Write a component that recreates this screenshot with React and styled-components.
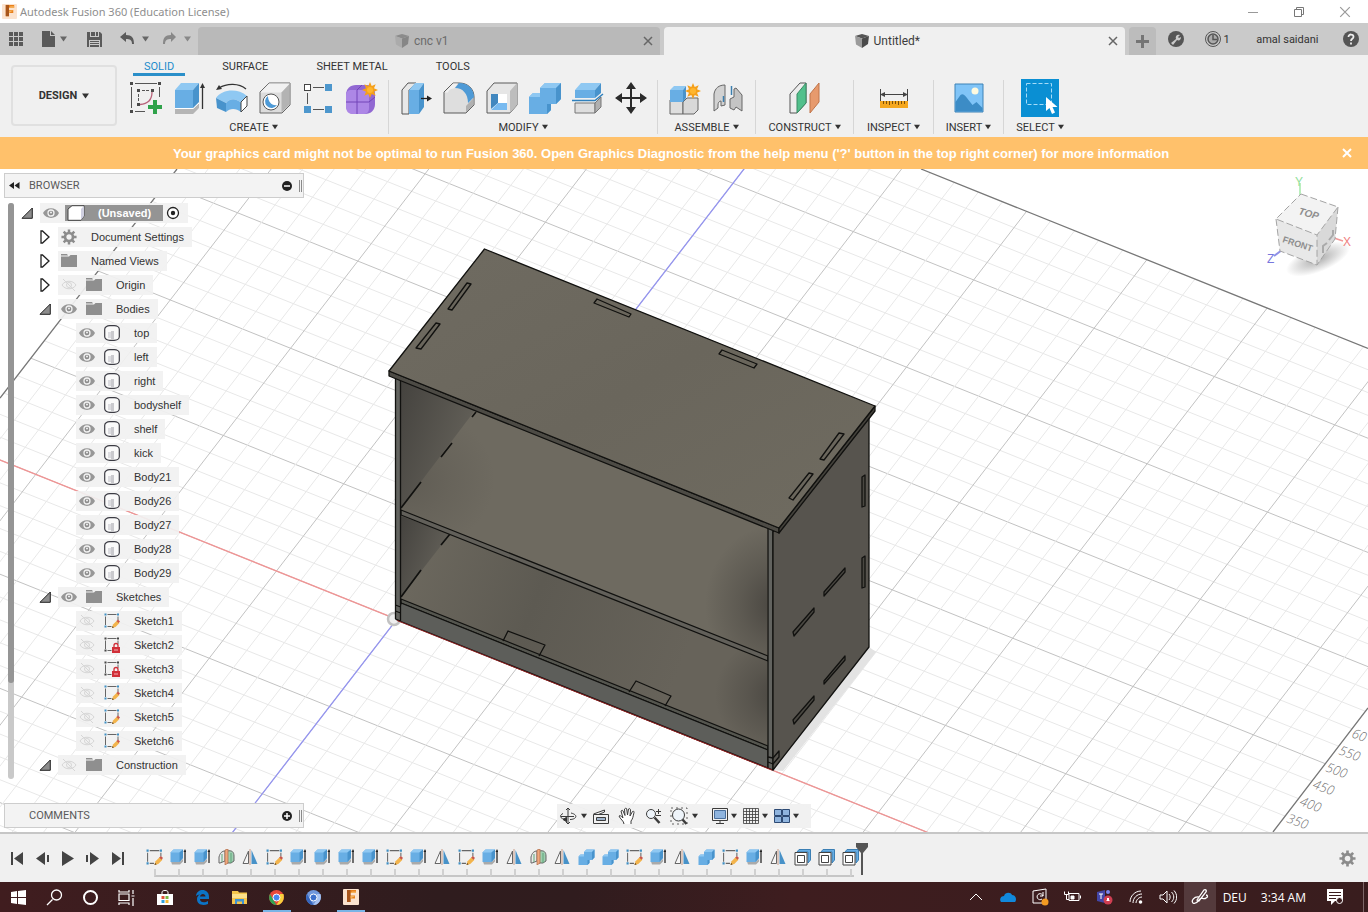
import React from "react";
import styled, { createGlobalStyle } from "styled-components";

const GlobalStyle = createGlobalStyle`
    *{
        box-sizing: border-box;
    }

    html, body, #root{
        height: 100%;
    }

    body{
        margin: 0;
        background-color: #f0f0f0;
        color: #333333;
        font-family: "Liberation Sans", Arial, sans-serif;
        font-size: 11px;
    }

    button{
        display: flex;
        align-items: center;
        justify-content: center;
        margin: 0;
        padding: 0;
        border: none;
        background-color: transparent;
        color: inherit;
        font: inherit;
        cursor: pointer;
    }

    svg{
        display: block;
        flex-shrink: 0;
    }

    ul{
        list-style: none;
        margin: 0;
        padding: 0;
    }
`

const Page = styled.div`
    min-height: 100vh;
    display: flex;
    flex-direction: column;
    overflow: hidden;
`

/* ---------- window title ---------- */

const TitleBar = styled.header`
    height: 23px;
    display: flex;
    align-items: center;
    background-color: #ffffff;
    padding-left: 2px;

    h1{
        flex: 1;
        margin: 0 0 0 3px;
        font-family: "Noto Sans", "Open Sans", sans-serif;
        font-size: 11px;
        font-weight: 400;
        color: #8e8e8e;
    }
`

const WindowButton = styled.button`
    width: 46px;
    height: 22px;
`

/* ---------- document tabs ---------- */

const TabBar = styled.div`
    height: 32px;
    display: flex;
    align-items: stretch;
    background-color: #cacaca;
`

const QuickTools = styled.div`
    width: 198px;
    display: flex;
    align-items: center;
    padding-left: 7px;
`

const QuickButton = styled.button`
    width: ${(p) => p.$w || 18}px;
    height: 24px;
    margin-right: ${(p) => p.$gap || 0}px;
`

const DocTab = styled.div`
    flex: 1;
    display: flex;
    align-items: center;
    margin: 4px 4px 0 0;
    padding: 0 6px 0 3px;
    border-radius: 4px 4px 0 0;
    background-color: ${(p) => (p.$active ? "#f0f0f0" : "#b9b9b9")};
    color: ${(p) => (p.$active ? "#3c3c3c" : "#6b6b6b")};
    font-family: Roboto, sans-serif;
    font-size: 12px;

    .doc-name{
        flex: 1;
        height: 28px;
        gap: 4px;
    }

    .doc-close{
        width: 12px;
        height: 20px;
    }
`

const AddTab = styled.button`
    width: 27px;
    margin-top: 4px;
    border-radius: 4px 4px 0 0;
    background-color: #bcbcbc;
`

const Account = styled.div`
    width: 212px;
    display: flex;
    align-items: center;
    justify-content: space-between;
    padding: 0 9px 0 12px;
    font-family: Roboto, sans-serif;
    font-size: 11px;

    .jobs{
        gap: 3px;
        margin-right: 6px;
    }

    .user{
        margin-right: 4px;
    }
`

/* ---------- ribbon ---------- */

const Ribbon = styled.div`
    height: 82px;
    display: flex;
    background-color: #f0f0f0;
    font-family: Roboto, sans-serif;
    font-size: 11px;
`

const DesignButton = styled.button`
    width: 106px;
    height: 61px;
    margin: 10px 2px 0 11px;
    border: 2px solid #e0e0e0;
    border-radius: 4px;
    gap: 5px;
    font-weight: 700;
`

const RibbonTabs = styled.nav`
    display: flex;
    gap: 26px;
    height: 22px;
    padding: 0 0 1px 14px;
`

const RibbonTab = styled.button`
    padding: 4px 11px 0;
    border-bottom: 3px solid ${(p) => (p.$active ? "#2a8fc9" : "transparent")};
    color: ${(p) => (p.$active ? "#1c8ccc" : "#333333")};
`

const Groups = styled.div`
    display: flex;
    padding-top: 3px;
`

const Group = styled.div`
    min-width: ${(p) => p.$min}px;
    height: 54px;
    display: flex;
    flex-direction: column;
    align-items: center;
    justify-content: space-between;
    border-right: 1px solid ${(p) => (p.$last ? "transparent" : "#d6d6d6")};

    .tools{
        display: flex;
        height: 36px;
        align-items: center;
    }
`

const ToolButton = styled.button`
    width: ${(p) => (p.$active ? 38 : 43)}px;
    height: ${(p) => (p.$active ? 38 : 36)}px;
    background-color: ${(p) => (p.$active ? "#0a8fd3" : "transparent")};
`

const GroupLabel = styled.button`
    gap: 3px;
    height: 14px;
`

const Banner = styled.div`
    height: 32px;
    display: flex;
    align-items: center;
    background-color: #ffc16b;
    color: #ffffff;
    font-size: 13px;
    font-weight: 700;

    p{
        flex: 1;
        margin: 0;
        padding-left: 16px;
        text-align: center;
    }

    button{
        width: 42px;
        height: 30px;
    }
`

/* ---------- viewport ---------- */

const Viewport = styled.main`
    position: relative;
    flex: 1;
    display: flex;
    flex-direction: column;
    padding: 4px;
    background-color: #ffffff;
`

const SceneSvg = styled.svg`
    position: absolute;
    inset: 0;
    width: 100%;
    height: 100%;
`

const CubeSvg = styled.svg`
    position: absolute;
    top: 4px;
    right: 12px;
`

const PanelHeader = styled.div`
    position: relative;
    width: 300px;
    height: 25px;
    display: flex;
    align-items: center;
    border: 1px solid #cdcdcd;
    background-color: #f3f3f3;
    font-family: Roboto, sans-serif;
    color: #5a5a5a;
    padding: 0 1px 0 4px;

    h2{
        flex: 1;
        margin: 0 0 0 9px;
        font-size: 11px;
        font-weight: 400;
    }

    .grip{
        width: 3px;
        height: 12px;
        margin-left: 7px;
        border-left: 1px solid #8a8a8a;
        border-right: 1px solid #8a8a8a;
    }
`

const BrowserBody = styled.div`
    position: relative;
    flex: 1;
    display: flex;
    padding: 3px 0 0 4px;
`

const Scroll = styled.div`
    width: 6px;
    height: 576px;
    margin-top: 2px;
    border-radius: 3px;
    background-color: #c9c9c9;

    div{
        height: 480px;
        border-radius: 3px;
        background-color: #959595;
    }
`

const Row = styled.li`
    height: 24px;
    display: flex;
    align-items: center;
    padding-left: ${(p) => p.$indent}px;
`

const Arrow = styled.button`
    width: 18px;
    height: 20px;
`

const Chip = styled.div`
    height: 20px;
    display: flex;
    align-items: center;
    margin-left: ${(p) => p.$left}px;
    padding: 0 8px 0 2px;
    background-color: rgba(241, 241, 241, 0.92);

    .cell{
        width: 18px;
        height: 20px;
        margin-right: 7px;
    }

    .label{
        margin-left: 6px;
        font-size: 11px;
        line-height: 20px;
    }
`

const RootChip = styled(Chip)`
    .cell{
        margin-right: 5px;
    }
`

const RootName = styled.button`
    width: 98px;
    height: 16px;
    margin-right: 3px;
    padding-left: 2px;
    justify-content: flex-start;
    background-color: #949494;
    color: #ffffff;
    font-weight: 700;
    gap: 13px;
`

const BottomRow = styled.div`
    position: relative;
    display: grid;
    grid-template-columns: 1fr auto 1fr;
    align-items: center;
`

const NavBar = styled.div`
    height: 24px;
    display: flex;
    align-items: center;
    padding: 0 12px 0 2px;
    background-color: rgba(240, 240, 240, 0.95);
`

const NavButton = styled.button`
    height: 22px;
    gap: ${(p) => (p.$tight ? 2 : 4)}px;
    margin-right: ${(p) => p.$gap}px;
`

/* ---------- timeline ---------- */

const Timeline = styled.section`
    height: 50px;
    display: flex;
    border-top: 2px solid #c6c6c6;
    background-color: #f0f0f0;
    padding: 0 12px 0 5px;

    .playback{
        display: flex;
        width: 137px;
        height: 48px;
        align-items: center;
    }

    .playback button{
        width: 25px;
        height: 24px;
    }

    .settings{
        width: 18px;
        margin-left: auto;
    }
`

const Track = styled.ol`
    list-style: none;
    display: flex;
    margin: 0;
    padding: 11px 0 0;
`

const Step = styled.li`
    width: 24px;

    button{
        width: 24px;
        height: 24px;
    }

    /* tick plus its share of the rail */
    &::after{
        content: "";
        display: block;
        width: 24px;
        height: 6px;
        margin-left: 12px;
        border-left: 2px solid #d0d0d0;
        border-bottom: 2px solid #c6c6c6;
    }

    &:last-of-type::after{
        width: 2px;
    }
`

const Marker = styled.div`
    margin: 9px 0 0 -7px;
`

/* ---------- taskbar ---------- */

const Taskbar = styled.footer`
    height: 30px;
    display: flex;
    background: linear-gradient(90deg, #401d1f 0, #2f1c1e 32%, #301c1e 42%, #3e1d1f 58%, #391d1e 100%);
    color: #ffffff;
    font-family: "Open Sans", "Noto Sans", sans-serif;
    font-size: 12px;
`

const TaskButton = styled.button`
    width: ${(p) => p.$w || 37}px;
    border-bottom: 2px solid transparent;
    border-top: 2px solid transparent;
    position: relative;

    &::after{
        content: "";
        position: absolute;
        left: 5px;
        right: 4px;
        bottom: -2px;
        height: 2px;
        background-color: ${(p) => (p.$open ? "#79b4e6" : "transparent")};
    }
`

const Tray = styled.div`
    display: flex;
    margin-left: auto;
    padding-right: 4px;

    .text{
        padding: 0 7px;
    }

    .notes{
        width: 38px;
        margin: 0 9px 0 3px;
    }

    .desktop{
        width: 1px;
        background-color: #7c6667;
    }
`

const TrayButton = styled.button`
    width: 32px;
    background-color: ${(p) => (p.$active ? "#543a3c" : "transparent")};
`

/* ---------- small glyphs ---------- */

const Caret = ({ color = "#333", w = 7 }) => (
    <svg width={w} height="6" viewBox="0 0 7 6">
        <path d="M0 .5h7L3.500 5.500z" fill={color} />
    </svg>
)

const Cross = ({ size = 10, color = "#666", width = 1.5 }) => (
    <svg width={size} height={size} viewBox="0 0 10 10">
        <path d="M1 1l8 8M9 1l-8 8" stroke={color} strokeWidth={width} />
    </svg>
)

const FusionLogo = ({ size }) => (
    <svg width={size} height={size} viewBox="0 0 16 16">
        <rect width="16" height="16" rx="1" fill="#fbe3cf" />
        <path d="M4 1h9v3H7.500v2.500H12v3H7.500V13H4z" fill="#e8811c" />
        <path d="M4 1h3.500v12H4z" fill="#a8561c" />
        <path d="M7.500 4l1.500-1.500h4V4zM7.500 9.500V7H12z" fill="#f7b25a" />
    </svg>
)

const DocCube = ({ faded }) => (
    <svg width="16" height="16" viewBox="0 0 16 16" opacity={faded ? 0.45 : 1}>
        <path d="M1 3l7-2 7 2-7 2.500z" fill="#555" />
        <path d="M1 3l7 2.500V15l-6-3.500z" fill="#9b9b9b" />
        <path d="M15 3L8 5.500V15l6-4z" fill="#4a4a4a" />
    </svg>
)

const Gear = ({ size = 18, color = "#8c8c8c" }) => (
    <svg width={size} height={size} viewBox="0 0 18 18">
        <circle cx="9" cy="9" r="4.500" fill="none" stroke={color} strokeWidth="3" />
        <path d="M9 .5v4M9 13.500v4M.5 9h4M13.500 9h4M3 3l2.800 2.800M12.200 12.200L15 15M15 3l-2.800 2.800M5.800 12.200L3 15" stroke={color} strokeWidth="2.800" />
    </svg>
)

const Eye = ({ off }) => off ? (
    <svg width="16" height="14" viewBox="0 0 16 14" fill="none" stroke="#d6d6d6">
        <path d="M1 7c3-5 11-5 14 0-3 5-11 5-14 0zM2 1l12 12" />
        <circle cx="8" cy="7" r="2.500" />
    </svg>
) : (
    <svg width="16" height="12" viewBox="0 0 16 12">
        <path d="M0 6c3-6.500 13-6.500 16 0-3 6.500-13 6.500-16 0z" fill="#979797" />
        <circle cx="8" cy="6" r="3" fill="#8c8c8c" stroke="#f2f2f2" strokeWidth="1.300" />
        <circle cx="8" cy="5.500" r="1" fill="#f2f2f2" />
    </svg>
)

const Folder = () => (
    <svg width="16" height="14" viewBox="0 0 16 14" fill="#8f8f8f">
        <path d="M0 0h6l1 1.500H0zM0 2.500h8L9.500 1H16v12H0z" />
    </svg>
)

const BodyIcon = () => (
    <svg width="16" height="16" viewBox="0 0 16 16">
        <rect x="0.700" y="0.700" width="14.600" height="14.600" rx="5" ry="3.500" fill="#fafafa" stroke="#3c3c44" strokeWidth="1.200" />
        <path d="M4 7h3v6H4z" fill="#dcdce0" />
        <path d="M7 6h3v8H7z" fill="#cacace" />
    </svg>
)

const Pencil = () => (
    <g>
        <path d="M8 15l1-3.500 4-4 2.500 2.500-4 4z" fill="#f3b44c" />
        <path d="M12.500 8L14 6.500l2 2L14.500 10z" fill="#c9564a" />
        <path d="M8 15l.5-2 1.500 1.500z" fill="#6a4a20" />
    </g>
)

const SketchIcon = ({ locked, size = 16 }) => (
    <svg width={size} height={size} viewBox="0 0 16 16">
        <path d="M1.500 3.500v8.500M3.500 1.500h9M14 3.500v3.500M3.500 13.500h4" stroke="#666" fill="none" />
        <path d="M.5.500h2v2h-2zM13 .5h2v2h-2zM.5 12.500h2v2h-2z" fill={locked ? "#444" : "#3e8fc4"} />
        {locked ? (
            <g>
                <rect x="8" y="10" width="8" height="6" fill="#d12f38" />
                <path d="M10 10V8.500a2 2 0 014 0V10" stroke="#d12f38" fill="none" strokeWidth="1.300" />
                <path d="M10 13h4" stroke="#f3b0b3" />
            </g>
        ) : <Pencil />}
    </svg>
)

/* ---------- ribbon drawings ---------- */

const BLUE = "#68aee4"
const BLUE_LIGHT = "#8fc8f2"
const BLUE_DARK = "#4893cc"

const Star = ({ x, y }) => (
    <g transform={`translate(${x} ${y})`}>
        <path d="M0-8l1.700 4L5.700-5.700 4-1.700 8 0 4 1.700 5.700 5.700 1.700 4 0 8-1.700 4-5.700 5.700-4 1.700-8 0-4-1.700-5.700-5.700-1.700-4z" fill="#f5a01a" />
        <circle r="3" fill="#ffb62e" />
    </g>
)

const toolArt = {
    sketch: (
        <>
            <path d="M5 1.500h22M1.500 5v21M29.500 5v10M5 29.500h10" stroke="#555" fill="none" />
            <path d="M0 0h3v3H0zM28 0h3v3h-3zM0 28h3v3H0zM7 7h3v3H7zM21 7h3v3h-3zM7 21h3v3H7z" fill="#4a4a4a" />
            <path d="M12 8.500h7M8.500 12v7" stroke="#555" strokeDasharray="3 1" />
            <path d="M22 10c0 8-5 12-12 12.500" stroke="#b9627a" fill="none" strokeWidth="1.300" />
            <path d="M23 18h4v5h5v4h-5v5h-4v-5h-5v-4h5z" fill="#2fa24a" />
        </>
    ),
    extrude: (
        <>
            <path d="M2 27h18v5H2zM20 27l6-6v5l-6 6z" fill="#b5b5b5" />
            <path d="M2 26.500h18l6-5.500" stroke="#fff" fill="none" />
            <path d="M2 8h18v18H2z" fill={BLUE} />
            <path d="M2 8l6-7h18l-6 7z" fill={BLUE_LIGHT} />
            <path d="M20 8l6-7v19l-6 6z" fill={BLUE_DARK} />
            <path d="M29.500 5v22" stroke="#333" strokeWidth="1.300" />
            <path d="M29.500 1l2.500 5h-5z" fill="#333" />
        </>
    ),
    revolve: (
        <>
            <path d="M0 16C6 7 22 6 31 14l-6 7c-5-5-11-5-15 0z" fill={BLUE_LIGHT} />
            <path d="M0 16l10 5v9L1 26z" fill={BLUE_DARK} />
            <path d="M10 21c4-5 10-5 15 0v9c-5-4-11-4-15 0z" fill={BLUE} />
            <path d="M25 20l6-6v10l-6 6z" fill="#fff" stroke="#444" />
            <path d="M3 6C11 1 23 1 30 7" stroke="#333" fill="none" strokeWidth="1.300" />
            <path d="M0 8l3-5 3 4z" fill="#333" />
        </>
    ),
    hole: (
        <>
            <path d="M1 10l9-9h21v22l-8 8H1z" fill="#dcdcdc" stroke="#666" />
            <path d="M1.500 10.500h21L31 1.500H10z" fill="#f1f1f1" />
            <path d="M22.500 10.500L30.500 2v20.500l-8 8z" fill="#b3b3b3" />
            <circle cx="12" cy="20" r="8" fill="#fff" stroke="#555" />
            <path d="M9 14a6.500 6.500 0 109 9c-5 1-9-3-9-9z" fill="#4e9ad6" />
        </>
    ),
    pattern: (
        <>
            <path d="M11 5.500h11M5.500 11v11M11 27.500h11" stroke="#555" />
            <rect x="2.500" y="2.500" width="6" height="6" fill="#fff" stroke="#444" />
            <path d="M23 2h7v7h-7zM2 24h7v7H2zM23 24h7v7h-7z" fill="#4d97cd" />
        </>
    ),
    form: (
        <>
            <path d="M1 13c0-6 4-10 10-10h11c6 0 8 4 8 9v10c0 6-4 10-10 10H9c-5 0-8-3-8-9z" fill="#9168d2" />
            <path d="M1 13c0-3 2-5 5-5h12c4 0 6 2 6 6v12c0 4-2 6-6 6H8c-5 0-7-3-7-8z" fill="#ad87e6" />
            <path d="M12 8v24M1 20h23M24 20l6-5M12 8l5-5" stroke="#7245b8" fill="none" />
            <Star x={25} y={8} />
        </>
    ),
    pressPull: (
        <>
            <path d="M2 8l6-7h8L9 8v24H2z" fill="#e8e8e8" stroke="#555" />
            <path d="M9 8l6-7h9l-5 7z" fill={BLUE_LIGHT} />
            <path d="M9 8h10v24H9z" fill={BLUE} />
            <path d="M19 8l5-7v24l-5 7z" fill={BLUE_DARK} />
            <path d="M21 16.500h7" stroke="#222" strokeWidth="1.300" />
            <path d="M27 13.500l5 3-5 3z" fill="#222" />
        </>
    ),
    fillet: (
        <>
            <path d="M1 10l9-9h6c9 0 15 6 15 14v8l-8 8H1z" fill="#dedede" stroke="#5a5a5a" />
            <path d="M1.500 10.500L10 1.500h5l-4 5c-3 0-5 1-6 4z" fill="#f1f1f1" />
            <path d="M23 24l7.500-8v7L23 30.500z" fill="#b0b0b0" />
            <path d="M12 6l4-5c9 0 15 6 15 14l-6 6C25 12 20 6 12 6z" fill="#4e9ad6" />
        </>
    ),
    shell: (
        <>
            <path d="M1 9l7-8h23v22l-7 8H1z" fill="#e6e6e6" stroke="#5a5a5a" />
            <path d="M24 9l7-8v22l-7 8z" fill="#bdbdbd" />
            <path d="M5 12h16v16H5z" fill="#fff" />
            <path d="M5 12h7v9l-7 6z" fill="#4187bf" />
            <path d="M5 28l7-7h9v7z" fill="#78baf0" />
        </>
    ),
    combine: (
        <>
            <path d="M0 15l4-4h7V6l5-5h16v16l-5 5h-5v6l-4 4H0z" fill={BLUE} />
            <path d="M0 15l4-4h7v4zM11 6l5-5h16l-5 5z" fill={BLUE_LIGHT} />
            <path d="M27 6l5-5v16l-5 5zM18 22h4v6l-4 4z" fill={BLUE_DARK} />
        </>
    ),
    split: (
        <>
            <path d="M3 8l6-7h20l-6 7z" fill={BLUE_LIGHT} />
            <path d="M3 8h20v8H3z" fill={BLUE} />
            <path d="M23 8l6-7v10l-6 5z" fill={BLUE_DARK} />
            <path d="M0 18.500h23L31 12" stroke="#2f80bc" fill="none" strokeWidth="1.500" />
            <path d="M3 21h20v10H3z" fill="#dedede" stroke="#777" />
            <path d="M23 21l6-6v10l-6 6z" fill="#b0b0b0" stroke="#777" />
        </>
    ),
    move: (
        <g fill="#2b2b2b">
            <path d="M16 0l5 7h-4v8h8v-4l7 5-7 5v-4h-8v8h4l-5 7-5-7h4v-8H7v4l-7-5 7-5v4h8V7h-4z" />
        </g>
    ),
    component: (
        <>
            <path d="M1 18h13v14H1z" fill="#dedede" stroke="#666" />
            <path d="M14 20l4-4h11v12l-4 4H14z" fill="#d8d8d8" stroke="#666" />
            <path d="M1 8l4-4h12l-3 4z" fill={BLUE_LIGHT} />
            <path d="M1 8h13v12H1z" fill={BLUE} />
            <path d="M14 8l3-4v12l-3 4z" fill={BLUE_DARK} />
            <Star x={24} y={9} />
        </>
    ),
    joint: (
        <>
            <path d="M2 12c1-6 5-9 11-9v20l-4 1v-5c-2 0-3 2-3 4v3l-4 3z" fill="#d2d2d2" stroke="#666" />
            <path d="M30 13l-6-7-2 1v8l-4 2v9l4 2 2-3 6 4z" fill="#c4c4c4" stroke="#666" />
            <path d="M11.500 14v6M19.500 4v9" stroke="#3c7fae" strokeWidth="1.500" />
        </>
    ),
    construct: (
        <>
            <path d="M1 12L11 1h6v20L8 31H1z" fill="#ededed" stroke="#555" />
            <path d="M8 12l9-11v20L8 31z" fill="#52c08c" stroke="#3b8b64" />
            <path d="M21 12L30 1v19l-9 11z" fill="#e79a6d" stroke="#c0754a" />
        </>
    ),
    measure: (
        <>
            <path d="M2.500 7v12M29.500 7v12M5 12.500h22" stroke="#444" />
            <path d="M2 12.500l5-2.500v5zM30 12.500L25 10v5z" fill="#444" />
            <path d="M2 19h28v7H2z" fill="#f5a71e" />
            <path d="M5.500 19v3M8.500 19v3M11.500 19v4M14.500 19v3M17.500 19v3M20.500 19v4M23.500 19v3M26.500 19v3" stroke="#7a4f0a" />
        </>
    ),
    insert: (
        <>
            <path d="M2 2h28v28H2z" fill="#80c4f7" stroke="#3c82b6" />
            <circle cx="22" cy="9" r="3.500" fill="#fffadf" />
            <path d="M2.500 29.500V20l5-7c3-2 5 1 8 5l4 5 4-3 6 6v3.500z" fill="#3c8cc6" />
        </>
    ),
    select: (
        <>
            <path d="M2.500 1.500h25v21h-25z" stroke="#a6dcf8" strokeDasharray="4 2" fill="none" />
            <path d="M22 15v14l3.500-3 2.500 6 3-1.500-2.500-5.500h5z" fill="#fff" />
        </>
    ),
}

const groups = [
    { label: "CREATE", min: 270, tools: ["sketch", "extrude", "revolve", "hole", "pattern", "form"] },
    { label: "MODIFY", min: 269, tools: ["pressPull", "fillet", "shell", "combine", "split", "move"] },
    { label: "ASSEMBLE", min: 98, tools: ["component", "joint"] },
    { label: "CONSTRUCT", min: 98, tools: ["construct"] },
    { label: "INSPECT", min: 80, tools: ["measure"] },
    { label: "INSERT", min: 70, tools: ["insert"] },
    { label: "SELECT", min: 73, tools: ["select"] },
]

/* ---------- 3d scene ---------- */

// grid basis on screen: one major cell along each family of lines
const SLOPE_X = 0.4015
const SLOPE_Z = 0.771
const STEP_X = 114.2
const STEP_Z = 157.6

const xLine = (k) => {
    const y0 = 460 + STEP_X * k
    return { x1: -200, y1: y0 - 200 * SLOPE_X, x2: 1600, y2: y0 + 1600 * SLOPE_X }
}

const zLine = (k) => {
    const x0 = 744 + STEP_Z * k
    return { x1: x0 + 200 * SLOPE_Z, y1: -31, x2: x0 - 900 * SLOPE_Z, y2: 1069 }
}

const range = (from, to) => Array.from({ length: to - from + 1 }, (_, i) => from + i)

const topSlots = [
    "448,309 467,283 471,284 452,310",
    "416,348 436,323 440,324 421,349",
    "597,299 631,314 629,317 594,303",
    "722,350 757,364 754,368 719,354",
    "820,459 839,433 844,434 824,460",
    "789,498 809,473 813,474 793,500",
]

const sideSlots = [
    "793,632 814,608 814,612 794,636",
    "824,592 845,568 845,572 824,596",
    "793,720 814,696 814,700 794,724",
    "824,681 845,656 845,660 824,684",
    "862,477 865,475 865,506 862,507",
    "862,558 865,556 865,587 862,588",
]

const Scene = () => (
    <SceneSvg viewBox="0 169 1368 663" preserveAspectRatio="xMidYMid slice" aria-label="Model">
        <defs>
            <clipPath id="plane">
                <path d="M177-169V169L-400 917V1400H832L1273 832L1368 708V348.300L921 168.800V-200z" />
            </clipPath>
            <linearGradient id="topFace" x1="0" y1="0" x2="1" y2="1">
                <stop offset="0" stopColor="#6f6b61" />
                <stop offset="0.5" stopColor="#6a665c" />
                <stop offset="1" stopColor="#6f6b60" />
            </linearGradient>
            <linearGradient id="wall" x1="0" y1="0" x2="1" y2="0.600">
                <stop offset="0" stopColor="#44423e" />
                <stop offset="1" stopColor="#66635b" />
            </linearGradient>
            <radialGradient id="shade">
                <stop offset="0" stopColor="#45423d" stopOpacity="0.9" />
                <stop offset="0.5" stopColor="#45423d" stopOpacity="0.400" />
                <stop offset="1" stopColor="#45423d" stopOpacity="0" />
            </radialGradient>
            <linearGradient id="lower" x1="0" y1="0.300" x2="0.800" y2="0.500">
                <stop offset="0" stopColor="#6c685e" />
                <stop offset="0.450" stopColor="#5d5a52" />
                <stop offset="1" stopColor="#67635a" />
            </linearGradient>
            <clipPath id="upperBay"><path d="M401 380L767 530V657L401 510z" /></clipPath>
            <clipPath id="lowerBay"><path d="M401 515L767 661V746L401 599z" /></clipPath>
        </defs>

        <g clipPath="url(#plane)">
            {range(-29, 30).map((i) => (
                <line key={`x${i}`} {...xLine(i / 5)} stroke={i % 5 ? "#e8e8e8" : "#c2c2c2"} />
            ))}
            {range(-40, 33).map((i) => (
                <line key={`z${i}`} {...zLine(i / 5)} stroke={i % 5 ? "#e8e8e8" : "#c2c2c2"} />
            ))}
        </g>
        <path d="M177 169L0 398M921 169L1368 348.500M1368 708L1273 832" stroke="#777" fill="none" strokeWidth="1.300" />
        <line {...xLine(0)} stroke="#f09494" strokeWidth="1.300" />
        <line {...zLine(0)} stroke="#9494f0" strokeWidth="1.300" />

        <g fill="#707070" fontFamily="Open Sans, sans-serif" fontSize="13" fontStyle="italic" fontWeight="300">
            {[350, 400, 450, 500, 550, 60].map((n, i) => (
                <text key={n} transform={`translate(${1286 + i * 13} ${822 - i * 17}) rotate(20)`}>{n}</text>
            ))}
        </g>

        <path d="M773 770L869 647L876 652L783 771z" fill="#e3e3e3" />
        <circle cx="394" cy="619" r="6" fill="#efefef" stroke="#c2c2c2" strokeWidth="2.500" />

        <g stroke="#11110f" strokeWidth="1.300" strokeLinejoin="round">
            <path d="M400 374L768 524V768L400 620z" fill="#6e6a60" stroke="none" />
            <g clipPath="url(#upperBay)" stroke="none">
                <ellipse cx="405" cy="480" rx="90" ry="75" fill="url(#shade)" opacity="0.400" />
                <ellipse cx="775" cy="605" rx="70" ry="80" fill="url(#shade)" />
            </g>
            <path d="M401 515L768 661V748L401 599z" fill="url(#lower)" stroke="none" />
            <g clipPath="url(#lowerBay)" stroke="none">
                <ellipse cx="780" cy="695" rx="65" ry="60" fill="url(#shade)" />
            </g>
            <path d="M401 376L476 409L401 508z" fill="url(#wall)" stroke="none" />
            <path d="M401 516L450 534L401 597z" fill="url(#wall)" stroke="none" />
            <path d="M476 412L472 417M452 443L441 457M421 482L401 508M450 534L441 545M421 570L401 597" fill="none" strokeWidth="1.700" />
            <path d="M401 510L768 656V661L401 515z" fill="#62605a" />
            <path d="M401 599L768 746V750L401 603z" fill="#55564f" />
            <path d="M401 603L768 750V768L397 620z" fill="#5d5e5a" />
            <path d="M503 641L508 631L545 645L539 656M629 692L636 681L671 696L665 706" fill="none" />
            <path d="M395.500 376L400.500 378V621L395.500 619zM395.500 605L400.500 607M395.500 611L400.500 613" fill="#62635f" />
            <path d="M768 528L773 530V770L768 768z" fill="#62635f" />
            <path d="M773 532L869 416V647L773 770z" fill="#57544e" />
            <path d="M768 757L773 758L779 751V757L773 764L768 762" fill="none" />
            <path d="M389 371L779 528L779 533L389 376z" fill="#4d4b45" />
            <path d="M779 528L875 406V411L779 533z" fill="#43413b" />
            <path d="M484.500 249L875 406L779 528L389 371z" fill="url(#topFace)" />
            {topSlots.map((s) => <polygon key={s} points={s} fill="#6a665c" />)}
            {sideSlots.map((s) => <polygon key={s} points={s} fill="#4a4842" />)}
        </g>
        <path d="M397 620.500L772 770" stroke="#8d2020" />
    </SceneSvg>
)

const ViewCube = () => (
    <CubeSvg width="92" height="104" viewBox="0 0 92 104" fontFamily="Liberation Sans, sans-serif">
        <defs>
            <radialGradient id="cubeShadow">
                <stop offset="0" stopColor="#888" stopOpacity="0.7" />
                <stop offset="1" stopColor="#888" stopOpacity="0" />
            </radialGradient>
        </defs>
        <ellipse cx="54" cy="86" rx="34" ry="13" fill="url(#cubeShadow)" transform="rotate(-22 54 86)" />
        <path d="M36 24V10" stroke="#a5e8a8" strokeWidth="1.500" />
        <path d="M70 65l9 3" stroke="#f29a9a" strokeWidth="1.500" />
        <path d="M18 77l-8 6" stroke="#8f8fe6" strokeWidth="2" />
        <path d="M37 21L74 34 53 62 12 46z" fill="#f3f3f3" />
        <path d="M12 46l41 16v30L16 78z" fill="#e8e8e8" />
        <path d="M53 62l21-28-3 32-18 26z" fill="#d9d9d9" />
        <path d="M37 21L74 34 53 62 12 46zM12 46l4 32 37 14V62M74 34l-3 32-18 26" fill="none" stroke="#a4a4a4" strokeDasharray="7 3" />
        <g fontWeight="700" fill="#8e8e8e">
            <text x="34" y="41" fontSize="10" transform="rotate(16 34 41)" fontStyle="italic">TOP</text>
            <text x="18" y="69" fontSize="9" transform="rotate(18 18 69)">FRONT</text>
            <path d="M59 80v-7l4-3M65 67l4-5v-5" stroke="#aaa" fill="none" strokeWidth="2" />
        </g>
        <text x="31" y="13" fontSize="12" fill="#92e09a">Y</text>
        <text x="79" y="73" fontSize="12" fill="#f08080">X</text>
        <text x="3" y="90" fontSize="12" fill="#7777dd">Z</text>
    </CubeSvg>
)

/* ---------- browser tree ---------- */

const tree = [
    { name: "Document Settings", level: 1, icon: "gear", arrow: "closed" },
    { name: "Named Views", level: 1, icon: "folder", arrow: "closed" },
    { name: "Origin", level: 1, icon: "folder", arrow: "closed", eye: "off" },
    { name: "Bodies", level: 1, icon: "folder", arrow: "open", eye: "on" },
    ...["top", "left", "right", "bodyshelf", "shelf", "kick", "Body21", "Body26", "Body27", "Body28", "Body29"].map((name) => (
        { name, level: 2, icon: "body", eye: "on" }
    )),
    { name: "Sketches", level: 1, icon: "folder", arrow: "open", eye: "on" },
    { name: "Sketch1", level: 2, icon: "sketch", eye: "off" },
    { name: "Sketch2", level: 2, icon: "locked", eye: "off" },
    { name: "Sketch3", level: 2, icon: "locked", eye: "off" },
    { name: "Sketch4", level: 2, icon: "sketch", eye: "off" },
    { name: "Sketch5", level: 2, icon: "sketch", eye: "off" },
    { name: "Sketch6", level: 2, icon: "sketch", eye: "off" },
    { name: "Construction", level: 1, icon: "folder", arrow: "open", eye: "off" },
]

const treeIcons = {
    gear: <Gear size={16} />,
    folder: <Folder />,
    body: <BodyIcon />,
    sketch: <SketchIcon />,
    locked: <SketchIcon locked />,
}

const TreeArrow = ({ open }) => (
    <Arrow aria-label={open ? "Collapse" : "Expand"}>
        {open ? (
            <svg width="12" height="12" viewBox="0 0 12 12"><path d="M11.300 1v10.300H1z" fill="#8d8d8d" stroke="#222" /></svg>
        ) : (
            <svg width="10" height="14" viewBox="0 0 10 14"><path d="M1 1h1.500L9 7l-6.500 6H1z" fill="#fff" stroke="#222" strokeWidth="1.300" /></svg>
        )}
    </Arrow>
)

const Centered = styled.span`
    height: 100%;
    display: flex;
    align-items: center;
    justify-content: center;
`

const TreeRow = ({ item }) => (
    <Row $indent={item.level === 1 ? 22 : 62}>
        {item.arrow && <TreeArrow open={item.arrow === "open"} />}
        <Chip $left={item.level === 1 ? 4 : 0}>
            {item.eye && <button className="cell" aria-label={`Show or hide ${item.name}`}><Eye off={item.eye === "off"} /></button>}
            <span className="cell"><Centered>{treeIcons[item.icon]}</Centered></span>
            <span className="label">{item.name}</span>
        </Chip>
    </Row>
)

/* ---------- navigation bar ---------- */

const navItems = [
    { name: "Orbit", caret: true, gap: 5, art: <><path d="M9 1v16M7 3l2-2 2 2M7 15l2 2 2-2M4 6.500C-1 9 2 12.500 8 12.500M12 6c8 2 5 6.500-1 6.500M2 9.500h13" /><path d="M8 10l-4 2.500 4 2.500" fill="#333" /></> },
    { name: "Look at", gap: 8, art: <><path d="M1.500 7.500h15v9h-15zM1.500 7l11-4v2l-6 2.500" /><path d="M4.500 10.500h9v3h-9z" fill="#9fb4cc" /></> },
    { name: "Pan", gap: 8, art: <path d="M6 17c0-3-4-5-5-8 1-1 2 0 4 2L3 4c1-1 2-1 2.500 1L7 8.500 6.500 2c1-1 2-1 2.200 0L9.500 8l1-6c1-1 2 0 2 1l-.5 6 2.500-4.500c1-.5 2 0 1.500 1-1 4-1 6-3 8.500v3" fill="#fff" /> },
    { name: "Zoom", gap: 8, art: <><circle cx="7" cy="7" r="4.500" fill="#eef4fa" /><path d="M10.500 10.500l5 5.500" strokeWidth="2.500" /><path d="M12 4.500h5M14.500 2v5M12 8.500h5" /></> },
    { name: "Fit", caret: true, gap: 13, art: <><circle cx="8.500" cy="8" r="6" fill="#eef4fa" /><path d="M12.500 12.500l4 4.500" strokeWidth="2.500" /><path d="M1 1h16v16H1z" strokeDasharray="2 3" strokeWidth="0.800" /></> },
    { name: "Display settings", caret: true, gap: 5, tight: true, art: <><path d="M1.500 1.500h15v12h-15zM5 16.500h8M9 13.500v3" /><path d="M3.500 3.500h11v8h-11z" fill="#8fb4de" stroke="#4a6f9c" /></> },
    { name: "Grid and snaps", caret: true, gap: 5, tight: true, art: <path d="M1.500 1.500h15v15h-15zM1.500 4.500h15M1.500 7.500h15M1.500 10.500h15M1.500 13.500h15M4.500 1.500v15M7.500 1.500v15M10.500 1.500v15M13.500 1.500v15" strokeWidth="0.800" /> },
    { name: "Viewports", caret: true, gap: 0, tight: true, art: <path d="M1.500 2.500h7v6h-7zM9.500 2.500h7v6h-7zM1.500 9.500h7v6h-7zM9.500 9.500h7v6h-7z" fill="#8fb4de" stroke="#2d4a74" /> },
]

/* ---------- timeline ---------- */

const MirrorIcon = () => (
    <svg width="16" height="16" viewBox="0 0 16 16">
        <path d="M6.500 2v12.500H1z" fill="#f6f6f6" stroke="#666" />
        <path d="M9.500 1l6 14h-6z" fill="#4892c8" />
        <path d="M8 0v16" stroke="#b77a5c" strokeWidth="0.700" />
    </svg>
)

const stepIcons = {
    s: <SketchIcon size={17} />,
    e: <svg width="16" height="16" viewBox="0 0 32 32">
        <path d="M2 25h18l6-5v5l-6 6H4z" fill="#aaa" />
        <path d="M1 7l6-6h19v17l-7 8H1z" fill={BLUE} />
        <path d="M1 7l6-6h19l-7 6z" fill={BLUE_LIGHT} /><path d="M19 7l7-6v17l-7 8z" fill={BLUE_DARK} />
        <path d="M30 4v24" stroke="#222" strokeWidth="2.500" /><path d="M30 0l3 6h-6z" fill="#222" />
    </svg>,
    g: <svg width="17" height="16" viewBox="0 0 17 16">
        <path d="M1 8c1-4 3-6 6-6v10l-5 2H1z" fill="#e8e8e8" stroke="#666" />
        <path d="M9 2c5-1 7 1 7 5v5l-3 2H9z" fill="#9fceb0" stroke="#666" />
        <path d="M7 1l3-1v14l-3 2z" fill="#efa77e" stroke="#b06a45" strokeWidth="0.700" />
        <path d="M4 5v8M13 4v10" stroke="#5da679" />
    </svg>,
    m: <MirrorIcon />,
    c: <svg width="17" height="16" viewBox="0 0 32 32">{toolArt.combine}</svg>,
    b: <svg width="17" height="17" viewBox="0 0 17 17">
        <path d="M3 3l2-2.500h11.500V11L14 14V3z" fill="#68aee4" stroke="#3b7fb4" />
        <path d="M1 3.500h12V16H1z" fill="#fff" stroke="#444" /><path d="M3.500 6.500h7v7h-7z" fill="#fff" stroke="#444" />
    </svg>,
}

const steps = "seegmseeeesemsemgmccsemcsembbb".split("")

const playback = [
    { name: "Go to start", d: "M1 2h2v13H1zM13 2v13L4 8.500z" },
    { name: "Step back", d: "M10 2v13L1 8.500zM12 5h2v7h-2z" },
    { name: "Play", d: "M2 1l12 7.500L2 16z" },
    { name: "Step forward", d: "M5 2v13l9-6.500zM1 5h2v7H1z" },
    { name: "Go to end", d: "M2 2v13l9-6.500zM12 2h2v13h-2z" },
]

/* ---------- taskbar ---------- */

const pinned = [
    { name: "Start", w: 36, art: <path d="M1 3l6-1v6H1zM8 2l8-1v7H8zM1 9h6v6l-6-1zM8 9h8v7l-8-1z" fill="#fff" /> },
    { name: "Search", w: 36, art: <path d="M6.500 10.500L1 16M15.500 6a5 5 0 11-10 0 5 5 0 0110 0z" fill="none" stroke="#fff" strokeWidth="1.300" /> },
    { name: "Cortana", w: 36, art: <circle cx="8.500" cy="8.500" r="6.500" fill="none" stroke="#fff" strokeWidth="2" /> },
    { name: "Task View", w: 36, art: <path d="M1 1v2h10V1M1 16v-2h10v2M1 5h10v6.500H1zM15 1v4M15 9v8M13.500 7h3" fill="none" stroke="#fff" strokeWidth="1.200" /> },
    { name: "Store", w: 40, art: <><path d="M1 5h16v11H1z" fill="#fff" /><path d="M6 5V3c0-2 6-2 6 0v2" stroke="#fff" fill="none" /><path d="M5.500 7h3v3h-3z" fill="#e0533a" /><path d="M9.500 7h3v3h-3z" fill="#79b942" /><path d="M5.500 11h3v3h-3z" fill="#2f9fdc" /><path d="M9.500 11h3v3h-3z" fill="#f2b632" /></> },
    { name: "Edge", art: <path d="M2 7C3-1 15-1 15 8v2H6c0 4 5 4 8 2v3C9 17 3 16 3 10c0-2 1-3.500 3-4.500-2 .2-3 .7-4 1.500zm4 .5h5.500C11.500 4 6.500 4 6 7.500z" fill="#0c74c6" /> },
    { name: "File Explorer", art: <><path d="M1 2h6l1 1.500h8V15H1z" fill="#f3c54c" /><path d="M1 5h15v4H1z" fill="#fbe08c" /><path d="M4 10h9v5h-2v-2.500H6V15H4z" fill="#3f93d3" /></> },
    { name: "Chrome", open: true, art: <><circle cx="8.500" cy="8.500" r="7.500" fill="#e8493a" /><path d="M2 5l4 7 2.500 4A7.500 7.500 0 012 5z" fill="#2fa653" /><path d="M8.500 16l3.500-6V5h3.500c1.500 6-2 11-7 11z" fill="#f8cf3c" /><circle cx="8.500" cy="8.500" r="3.500" fill="#4786ee" stroke="#fff" /></> },
    { name: "Chromium", art: <><circle cx="8.500" cy="8.500" r="7.500" fill="#6f97dc" /><path d="M2 5l4 7 2.500 4A7.500 7.500 0 012 5z" fill="#3565bd" /><path d="M8.500 16l3.500-6V5h3.500c1.500 6-2 11-7 11z" fill="#a9c4f2" /><circle cx="8.500" cy="8.500" r="3.500" fill="#3c70cc" stroke="#fff" /></> },
]

const tray = [
    { name: "Show hidden icons", art: <path d="M3 12l6-6 6 6" /> },
    { name: "OneDrive", art: <path d="M2 14C0 11 2 8 5 8c1-4 7-4 8-1 4 0 5 5 3 7z" fill="#1189dc" stroke="none" /> },
    { name: "Screen sync", art: <><path d="M2 3l13-2v14H2zM12 8a3 3 0 10-1 3M12 4v4H9" /><circle cx="14" cy="14" r="3.500" fill="#f39a22" stroke="none" /></> },
    { name: "Battery", art: <><path d="M6 5.500h10v7H6zM17.500 7.500v3M1.500 3.500v3h4v-3M3.500 6.500v5H6" /><path d="M8 8h3v3H8z" fill="#fff" /></> },
    { name: "Teams", art: <><path d="M2 4l8-2v13l-8-2z" fill="#4346a8" stroke="none" /><circle cx="13" cy="4" r="2" fill="#7b83eb" stroke="none" /><path d="M4 6h4M6 6v5" /><circle cx="13" cy="12" r="4.500" fill="#cf3f52" stroke="none" /><path d="M11 13h4l-1-1v-2h-2v2z" fill="#fff" stroke="none" /></> },
    { name: "Network", art: <><path d="M3 14C3 8 8 3 14 3M6 15c0-5 4-9 9-9M9 15c0-3 3-6 6-6" /><circle cx="13.500" cy="14" r="1.800" fill="#fff" stroke="none" /></> },
    { name: "Volume", art: <path d="M1 7h3l4-4v12l-4-4H1zM10 6c1.500 1.500 1.500 4.500 0 6M12.500 4c3 3 3 7 0 10M15 2.500c3.500 4 3.500 9 0 13" /> },
    { name: "Pen", active: true, art: <path d="M6 12l7-10c1-1 3 0 2 2L8 13zM8 9c-5-1-8 4-6 6 3 2 5-2 7-4 1-2 4 1 6-1 2-1 2-3 0-3" strokeWidth="1.300" /> },
]

const App = () => {
    return (
        <Page>
            <GlobalStyle />

            <TitleBar>
                <FusionLogo size={15} />
                <h1>Autodesk Fusion 360 (Education License)</h1>
                <WindowButton aria-label="Minimize"><svg width="12" height="12"><path d="M1 6.500h10" stroke="#999" /></svg></WindowButton>
                <WindowButton aria-label="Restore"><svg width="12" height="12" fill="none" stroke="#777"><path d="M1.500 3.500h7v7h-7zM3.500 3.500v-2h7v7h-2" /></svg></WindowButton>
                <WindowButton aria-label="Close"><Cross size={12} color="#999" width={1} /></WindowButton>
            </TitleBar>

            <TabBar>
                <QuickTools>
                    <QuickButton aria-label="Data panel" $gap={14}>
                        <svg width="14" height="14" fill="#5a5a5a"><path d="M0 0h4v4H0zM5 0h4v4H5zM10 0h4v4h-4zM0 5h4v4H0zM5 5h4v4H5zM10 5h4v4h-4zM0 10h4v4H0zM5 10h4v4H5zM10 10h4v4h-4z" /></svg>
                    </QuickButton>
                    <QuickButton aria-label="File" $w={30} $gap={16}>
                        <svg width="14" height="16" fill="#5a5a5a"><path d="M1 0h8v5h5v11H1zM10 0l4 4h-4z" /></svg>
                        <svg width="5" height="1" /><Caret color="#666" />
                    </QuickButton>
                    <QuickButton aria-label="Save" $gap={15}>
                        <svg width="15" height="15" fill="#5a5a5a"><path d="M0 0h3v5h9V0h1l2 2v13h-2V8H2v7H0zM4 0h4v4H4zM9 0h2v4H9zM3 9h9v1H3zM3 11h9v1H3zM3 13h9v2H3z" /></svg>
                    </QuickButton>
                    <QuickButton aria-label="Undo" $w={32} $gap={10}>
                        <svg width="15" height="14"><path d="M6 0v3c6 0 8 3 8 9h-2c0-4-2-5-6-5v3L0 5z" fill="#5a5a5a" /></svg>
                        <svg width="7" height="1" /><Caret color="#666" />
                    </QuickButton>
                    <QuickButton aria-label="Redo" $w={32}>
                        <svg width="15" height="14"><path d="M9 0v3C3 3 1 6 1 12h2c0-4 2-5 6-5v3l5-5z" fill="#888" /></svg>
                        <svg width="7" height="1" /><Caret color="#888" />
                    </QuickButton>
                </QuickTools>
                <DocTab>
                    <button className="doc-name"><DocCube faded />cnc v1</button>
                    <button className="doc-close" aria-label="Close cnc v1"><Cross /></button>
                </DocTab>
                <DocTab $active>
                    <button className="doc-name"><DocCube />Untitled*</button>
                    <button className="doc-close" aria-label="Close Untitled"><Cross /></button>
                </DocTab>
                <AddTab aria-label="New design">
                    <svg width="13" height="13"><path d="M5 0h3v5h5v3H8v5H5V8H0V5h5z" fill="#757575" /></svg>
                </AddTab>
                <Account>
                    <button aria-label="Extensions">
                        <svg width="16" height="16"><circle cx="8" cy="8" r="8" fill="#555" /><path d="M3 12l5-4c-1-3 1-5 4-4L10 6l1 1 2-1c0 3-2 4-4 3l-4 5z" fill="#cacaca" /></svg>
                    </button>
                    <button className="jobs" aria-label="Job status">
                        <svg width="16" height="16" fill="none" stroke="#555"><circle cx="8" cy="8" r="7.500" /><circle cx="8" cy="8" r="5" strokeWidth="1.500" fill="#aaa" /><path d="M8 4v4.500h4" strokeWidth="1.500" /></svg>
                        1
                    </button>
                    <button className="user">amal saidani</button>
                    <button aria-label="Help">
                        <svg width="16" height="16"><circle cx="8" cy="8" r="8" fill="#555" /><path d="M5.500 6c0-3.500 5-3 5-.3C10.500 8 8 7.500 8 10M8 11.500v2" stroke="#eee" fill="none" strokeWidth="1.800" /></svg>
                    </button>
                </Account>
            </TabBar>

            <Ribbon>
                <DesignButton>DESIGN <Caret /></DesignButton>
                <div>
                    <RibbonTabs>
                        <RibbonTab $active>SOLID</RibbonTab>
                        <RibbonTab>SURFACE</RibbonTab>
                        <RibbonTab>SHEET METAL</RibbonTab>
                        <RibbonTab>TOOLS</RibbonTab>
                    </RibbonTabs>
                    <Groups>
                        {groups.map((group, i) => (
                            <Group key={group.label} $min={group.min} $last={i === groups.length - 1}>
                                <div className="tools">
                                    {group.tools.map((tool) => (
                                        <ToolButton key={tool} aria-label={tool} $active={tool === "select"}>
                                            <svg width="32" height="32" viewBox="0 0 32 32" overflow="visible">{toolArt[tool]}</svg>
                                        </ToolButton>
                                    ))}
                                </div>
                                <GroupLabel>{group.label}<Caret w={6} /></GroupLabel>
                            </Group>
                        ))}
                    </Groups>
                </div>
            </Ribbon>

            <Banner role="alert">
                <p>Your graphics card might not be optimal to run Fusion 360. Open Graphics Diagnostic from the help menu ('?' button in the top right corner) for more information</p>
                <button aria-label="Dismiss"><Cross color="#fff" width={2} /></button>
            </Banner>

            <Viewport>
                <Scene />
                <ViewCube />
                <PanelHeader>
                    <svg width="11" height="8" fill="#222"><path d="M5 0v7L0 3.500zM10.500 0v7l-5-3.500z" /></svg>
                    <h2>BROWSER</h2>
                    <button aria-label="Collapse browser">
                        <svg width="10" height="10"><circle cx="5" cy="5" r="5" fill="#222" /><path d="M2 5h6" stroke="#fff" strokeWidth="1.500" /></svg>
                    </button>
                    <div className="grip" />
                </PanelHeader>
                <BrowserBody>
                    <Scroll><div /></Scroll>
                    <ul>
                        <Row $indent={4}>
                            <TreeArrow open />
                            <RootChip $left={4}>
                                <button className="cell" aria-label="Show or hide document"><Eye /></button>
                                <RootName>
                                    <svg width="18" height="16" viewBox="0 0 18 16"><path d="M1 4l4-3.300h12V11l-3 4.300H1z" fill="#fff" stroke="#444" /><path d="M14 4v11l3-4V1z" fill="#cfcfe0" /></svg>
                                    (Unsaved)
                                </RootName>
                                <button aria-label="Activate">
                                    <svg width="14" height="14"><circle cx="7" cy="7" r="5.500" fill="#fff" stroke="#222" strokeWidth="1.300" /><circle cx="7" cy="7" r="2.200" fill="#222" /></svg>
                                </button>
                            </RootChip>
                        </Row>
                        {tree.map((item) => <TreeRow key={item.name} item={item} />)}
                    </ul>
                </BrowserBody>
                <BottomRow>
                    <PanelHeader>
                        <svg width="11" height="8" />
                        <h2>COMMENTS</h2>
                        <button aria-label="Add comment">
                            <svg width="10" height="10"><circle cx="5" cy="5" r="5" fill="#222" /><path d="M2 5h6M5 2v6" stroke="#fff" strokeWidth="1.500" /></svg>
                        </button>
                        <div className="grip" />
                    </PanelHeader>
                    <NavBar>
                        {navItems.map((item) => (
                            <NavButton key={item.name} aria-label={item.name} $gap={item.gap} $tight={item.tight}>
                                <svg width="18" height="18" fill="none" stroke="#3c3c3c">{item.art}</svg>
                                {item.caret && <Caret w={6} />}
                            </NavButton>
                        ))}
                    </NavBar>
                </BottomRow>
            </Viewport>

            <Timeline>
                <div className="playback">
                    {playback.map((item) => (
                        <button key={item.name} aria-label={item.name}>
                            <svg width="15" height="17" fill="#444"><path d={item.d} /></svg>
                        </button>
                    ))}
                </div>
                <Track>
                    {steps.map((step, i) => (
                        <Step key={i}><button aria-label={`Feature ${i + 1}`}>{stepIcons[step]}</button></Step>
                    ))}
                </Track>
                <Marker>
                    <svg width="14" height="33" fill="#555"><path d="M1 0h12v4L8 10v22H6V10L1 4z" /></svg>
                </Marker>
                <button className="settings" aria-label="Timeline settings"><Gear size={17} /></button>
            </Timeline>

            <Taskbar>
                {pinned.map((item) => (
                    <TaskButton key={item.name} aria-label={item.name} $w={item.w} $open={item.open}>
                        <svg width="17" height="17">{item.art}</svg>
                    </TaskButton>
                ))}
                <TaskButton aria-label="Fusion 360" $open><FusionLogo size={16} /></TaskButton>
                <Tray>
                    {tray.map((item) => (
                        <TrayButton key={item.name} aria-label={item.name} $active={item.active}>
                            <svg width="18" height="18" fill="none" stroke="#fff">{item.art}</svg>
                        </TrayButton>
                    ))}
                    <button className="text">DEU</button>
                    <button className="text">3:34 AM</button>
                    <button className="notes" aria-label="Notifications">
                        <svg width="18" height="18"><path d="M1 1h16v12H9l-4 4v-4H1z" fill="#fff" /><path d="M3 4.500h12M3 7.500h12M3 10.500h7" stroke="#3a1c1e" /><circle cx="13.500" cy="12.500" r="3" fill="#3a1c1e" stroke="#fff" /></svg>
                    </button>
                    <div className="desktop" />
                </Tray>
            </Taskbar>
        </Page>
    )
}

export default App
